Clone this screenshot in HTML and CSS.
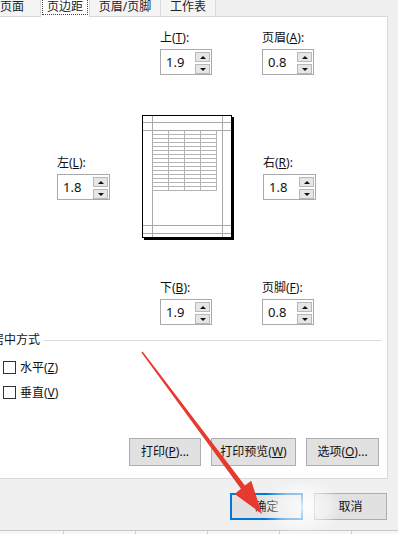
FILE: index.html
```html
<!DOCTYPE html>
<html lang="zh-CN">
<head>
<meta charset="utf-8">
<title>页面设置</title>
<link rel="stylesheet" href="styles.css">
</head>
<body>
<div class="dialog">
  <div class="tabs">
    <div class="tab tab-first">页面</div>
    <div class="tab tab-active"><span class="focus">页边距</span></div>
    <div class="tab tab-hf">页眉/页脚</div>
    <div class="tab tab-sheet">工作表</div>
  </div>

  <div class="panel">
    <div class="row row-top">
      <div class="field">
        <div class="label">上(<u>T</u>):</div>
        <div class="spin"><span class="val">1.9</span><span class="btns"><span class="sb up"></span><span class="sb down"></span></span></div>
      </div>
      <div class="field">
        <div class="label">页眉(<u>A</u>):</div>
        <div class="spin"><span class="val">0.8</span><span class="btns"><span class="sb up"></span><span class="sb down"></span></span></div>
      </div>
    </div>

    <div class="row row-mid">
      <div class="field">
        <div class="label">左(<u>L</u>):</div>
        <div class="spin"><span class="val">1.8</span><span class="btns"><span class="sb up"></span><span class="sb down"></span></span></div>
      </div>
      <svg class="page" width="92" height="125" viewBox="0 0 92 125">
        <rect x="90" y="2" width="2" height="123" fill="#000"/>
        <rect x="2" y="123" width="90" height="2" fill="#000"/>
        <rect x="0.5" y="0.5" width="89" height="122" fill="#fff" stroke="#000"/>
        <g stroke="#a8a8a8" stroke-width="1">
          <line x1="10.5" y1="1" x2="10.5" y2="122"/>
          <line x1="80.5" y1="1" x2="80.5" y2="122"/>
          <line x1="1" y1="7.5" x2="89" y2="7.5"/>
          <line x1="1" y1="15.5" x2="89" y2="15.5"/>
          <line x1="1" y1="110.5" x2="89" y2="110.5"/>
          <line x1="1" y1="118.5" x2="89" y2="118.5"/>
        </g>
        <g stroke="#b4b4b4" stroke-width="1">
          <line x1="26.5" y1="15.5" x2="26.5" y2="75.5"/>
          <line x1="42.5" y1="15.5" x2="42.5" y2="75.5"/>
          <line x1="58.5" y1="15.5" x2="58.5" y2="75.5"/>
          <line x1="74.5" y1="15.5" x2="74.5" y2="75.5"/>
          <line x1="10.5" y1="19.5" x2="74.5" y2="19.5"/>
          <line x1="10.5" y1="23.5" x2="74.5" y2="23.5"/>
          <line x1="10.5" y1="27.5" x2="74.5" y2="27.5"/>
          <line x1="10.5" y1="31.5" x2="74.5" y2="31.5"/>
          <line x1="10.5" y1="35.5" x2="74.5" y2="35.5"/>
          <line x1="10.5" y1="39.5" x2="74.5" y2="39.5"/>
          <line x1="10.5" y1="43.5" x2="74.5" y2="43.5"/>
          <line x1="10.5" y1="47.5" x2="74.5" y2="47.5"/>
          <line x1="10.5" y1="51.5" x2="74.5" y2="51.5"/>
          <line x1="10.5" y1="55.5" x2="74.5" y2="55.5"/>
          <line x1="10.5" y1="59.5" x2="74.5" y2="59.5"/>
          <line x1="10.5" y1="63.5" x2="74.5" y2="63.5"/>
          <line x1="10.5" y1="67.5" x2="74.5" y2="67.5"/>
          <line x1="10.5" y1="71.5" x2="74.5" y2="71.5"/>
          <line x1="10.5" y1="75.5" x2="74.5" y2="75.5"/>
        </g>
      </svg>
      <div class="field">
        <div class="label">右(<u>R</u>):</div>
        <div class="spin"><span class="val">1.8</span><span class="btns"><span class="sb up"></span><span class="sb down"></span></span></div>
      </div>
    </div>

    <div class="row row-bot">
      <div class="field">
        <div class="label">下(<u>B</u>):</div>
        <div class="spin"><span class="val">1.9</span><span class="btns"><span class="sb up"></span><span class="sb down"></span></span></div>
      </div>
      <div class="field">
        <div class="label">页脚(<u>F</u>):</div>
        <div class="spin"><span class="val">0.8</span><span class="btns"><span class="sb up"></span><span class="sb down"></span></span></div>
      </div>
    </div>

    <div class="group-head">
      <span class="group-title">居中方式</span>
      <span class="group-line"></span>
    </div>
    <div class="check-row"><span class="box"></span><span class="ctext">水平(<u>Z</u>)</span></div>
    <div class="check-row"><span class="box"></span><span class="ctext">垂直(<u>V</u>)</span></div>

    <div class="panel-buttons">
      <div class="btn btn-print">打印(<u>P</u>)...</div>
      <div class="btn btn-preview">打印预览(<u>W</u>)</div>
      <div class="btn btn-options">选项(<u>O</u>)...</div>
    </div>
  </div>

  <div class="footer">
    <div class="btn btn-ok">确定</div>
    <div class="btn btn-cancel">取消</div>
  </div>
  <div class="sheet-strip">
    <span class="cell"></span><span class="cell"></span><span class="cell"></span><span class="cell"></span><span class="cell"></span><span class="cell"></span>
  </div>
</div>

<div class="watermark"></div>
<svg class="arrow" width="398" height="534" viewBox="0 0 398 534">
  <polygon points="142.6,351.6 244.9,485.6 251.2,480.8 262,514 234.6,494.0 240.9,488.8 141.4,352.4" fill="#e63a2e"/>
</svg>
</body>
</html>
```

FILE: styles.css
```css
* { box-sizing: border-box; }

html, body {
  margin: 0;
  padding: 0;
}

body {
  width: 398px;
  height: 534px;
  overflow: hidden;
  position: relative;
  background: #f0f0f0;
  font-family: "Noto Sans", "Noto Sans CJK SC", sans-serif;
  font-size: 12px;
  color: #000;
}

u { text-decoration: underline; text-underline-offset: 1px; }

.dialog {
  width: 398px;
  height: 534px;
  display: flex;
  flex-direction: column;
  background: #f0f0f0;
}

/* tabs */
.tabs {
  display: flex;
  align-items: flex-start;
  height: 16px;
  flex: none;
}

.tab {
  height: 16px;
  line-height: 14px;
  text-align: center;
  border-right: 1px solid #d9d9d9;
  background: #f4f4f4;
  white-space: nowrap;
  color: #222;
}

.tab-first { margin-left: -16px; width: 57px; }
.tab-active {
  width: 49px;
  height: 17px;
  background: #fff;
  position: relative;
  z-index: 1;
  padding: 0 1px 2px 1px;
}
.focus {
  display: block;
  height: 15px;
  border: 1px dotted #444;
  border-top: none;
  line-height: 13px;
}
.tab-hf { width: 71px; }
.tab-sheet { width: 55px; }

/* panel */
.panel {
  flex: none;
  margin-left: -2px;
  width: 390px;
  height: 463px;
  background: #fff;
  border: 1px solid #d9d9d9;
  padding-left: 1px;
  display: flex;
  flex-direction: column;
}

.row { display: flex; }

.row-top { margin-top: 13px; padding-left: 160px; gap: 50px; }
.row-mid { margin-top: 40px; padding-left: 57px; align-items: center; }
.row-bot { margin-top: 40px; padding-left: 160px; gap: 50px; }

.row-mid .page { margin: 0 29px 0 32px; display: block; }

.field { display: flex; flex-direction: column; }

.label {
  height: 16px;
  line-height: 16px;
  margin-bottom: 3px;
  white-space: nowrap;
  color: #111;
}

.spin {
  width: 52px;
  height: 26px;
  border: 1px solid #a9a9a9;
  background: #fff;
  display: flex;
  align-items: stretch;
}
.row-mid .spin { width: 53px; }

.val {
  flex: 1;
  padding-left: 5px;
  line-height: 24px;
  font-size: 13px;
  color: #111;
}

.btns {
  width: 15px;
  margin-right: 1px;
  padding-top: 2px;
  display: flex;
  flex-direction: column;
  gap: 2px;
}

.sb {
  height: 10px;
  border: 1px solid #b8b8b8;
  background: #e6e6e6;
  display: flex;
  align-items: center;
  justify-content: center;
}
.sb::after {
  content: "";
  width: 0;
  height: 0;
  border-left: 3px solid transparent;
  border-right: 3px solid transparent;
}
.up::after { border-bottom: 3px solid #111; }
.down::after { border-top: 3px solid #111; }

/* centering group */
.group-head {
  display: flex;
  align-items: center;
  margin-top: 7px;
  margin-left: -8px;
  margin-right: 5px;
  height: 16px;
}
.group-title {
  line-height: 16px;
  white-space: nowrap;
  margin-right: 4px;
  color: #111;
}
.group-line {
  flex: 1;
  border-top: 1px solid #dadada;
  margin-top: 1px;
}

.check-row {
  display: flex;
  align-items: center;
  height: 25px;
  padding-left: 3px;
}
.group-head + .check-row { margin-top: 7px; }

.box {
  width: 13px;
  height: 13px;
  border: 1px solid #333;
  background: #fff;
  margin-right: 4px;
  flex: none;
}
.ctext { line-height: 16px; color: #111; }

/* buttons */
.panel-buttons {
  display: flex;
  justify-content: flex-end;
  gap: 10px;
  margin-top: 33px;
  margin-right: 8px;
}

.btn {
  height: 28px;
  line-height: 26px;
  text-align: center;
  background: #e1e1e1;
  border: 1px solid #adadad;
  white-space: nowrap;
  color: #111;
}
.btn-print { width: 72px; }
.btn-preview { width: 85px; }
.btn-options { width: 73px; }

.footer {
  flex: none;
  height: 51px;
  display: flex;
  justify-content: flex-end;
  align-items: flex-start;
  gap: 11px;
  padding-top: 14px;
  padding-right: 11px;
  background: #f0f0f0;
}
.btn-ok, .btn-cancel {
  width: 73px;
  height: 27px;
  line-height: 25px;
}
.btn-ok {
  border: 2px solid #0078d7;
  line-height: 23px;
}

.sheet-strip {
  flex: 1;
  display: flex;
  border-top: 1px solid #c8c8c8;
  background: #f7f7f7;
}
.cell {
  width: 72px;
  flex: none;
  border-right: 1px solid #d0d0d0;
}
.cell:first-child { width: 64px; }

/* overlays */
.watermark {
  position: absolute;
  left: 262px;
  top: 480px;
  width: 80px;
  height: 54px;
  background: radial-gradient(ellipse at center, rgba(255,255,255,0.85) 0%, rgba(255,255,255,0.5) 45%, rgba(255,255,255,0) 72%);
  pointer-events: none;
}

.arrow {
  position: absolute;
  left: 0;
  top: 0;
  pointer-events: none;
}
```
